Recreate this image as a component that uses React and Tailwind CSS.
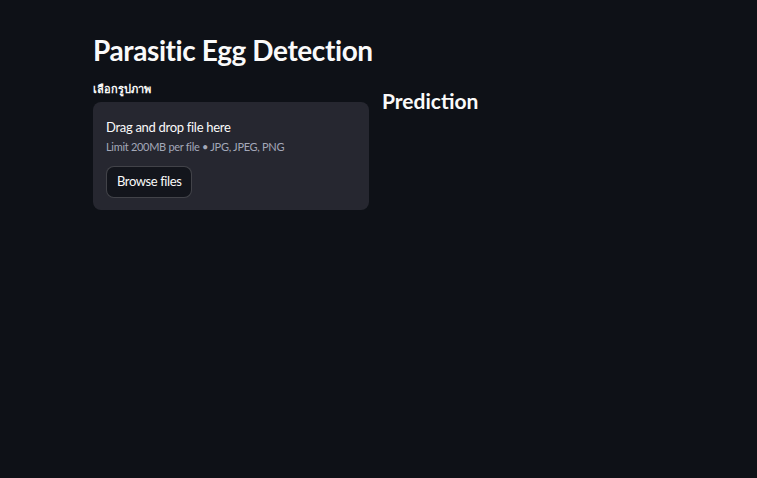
import React from "react";

export default function App() {
  return (
    <div
      className="min-h-screen w-full bg-[#0e1117] text-[#fafafa]"
      style={{ fontFamily: 'Lato, "Noto Sans", sans-serif' }}
    >
      <div className="pl-[93px] pr-[20px] pt-[30px]">
        <h1 className="text-[28px] font-bold leading-[40px] tracking-[-0.4px]">
          Parasitic Egg Detection
        </h1>
        <div className="mt-[10px] flex gap-[13px]">
          {/* LEFT COLUMN */}
          <div className="w-[276px]">
            <div className="h-[18px] text-[11px] font-semibold leading-[18px]">เลือกรูปภาพ</div>
            <div className="mt-[4px] rounded-lg bg-[#262730] px-[13px] pb-[12px] pt-[16px]">
              <div className="text-[13px] leading-[18px] tracking-[-0.3px]">Drag and drop file here</div>
              <div className="mt-[3px] text-[11px] leading-[16px] tracking-[-0.3px] text-[#a3a8b8]">
                Limit 200MB per file • JPG, JPEG, PNG
              </div>
              <button className="mt-[11px] h-[32px] rounded-lg border border-white/20 bg-[#13151c] px-[10px] text-[13px] tracking-[-0.4px] text-[#fafafa]">
                Browse files
              </button>
            </div>
          </div>

          {/* RIGHT COLUMN */}
          <div className="flex-1">
            <h3 className="pt-[6px] text-[21px] font-bold leading-[30px]">
              Prediction
            </h3>
          </div>
        </div>
      </div>
    </div>
  );
}
